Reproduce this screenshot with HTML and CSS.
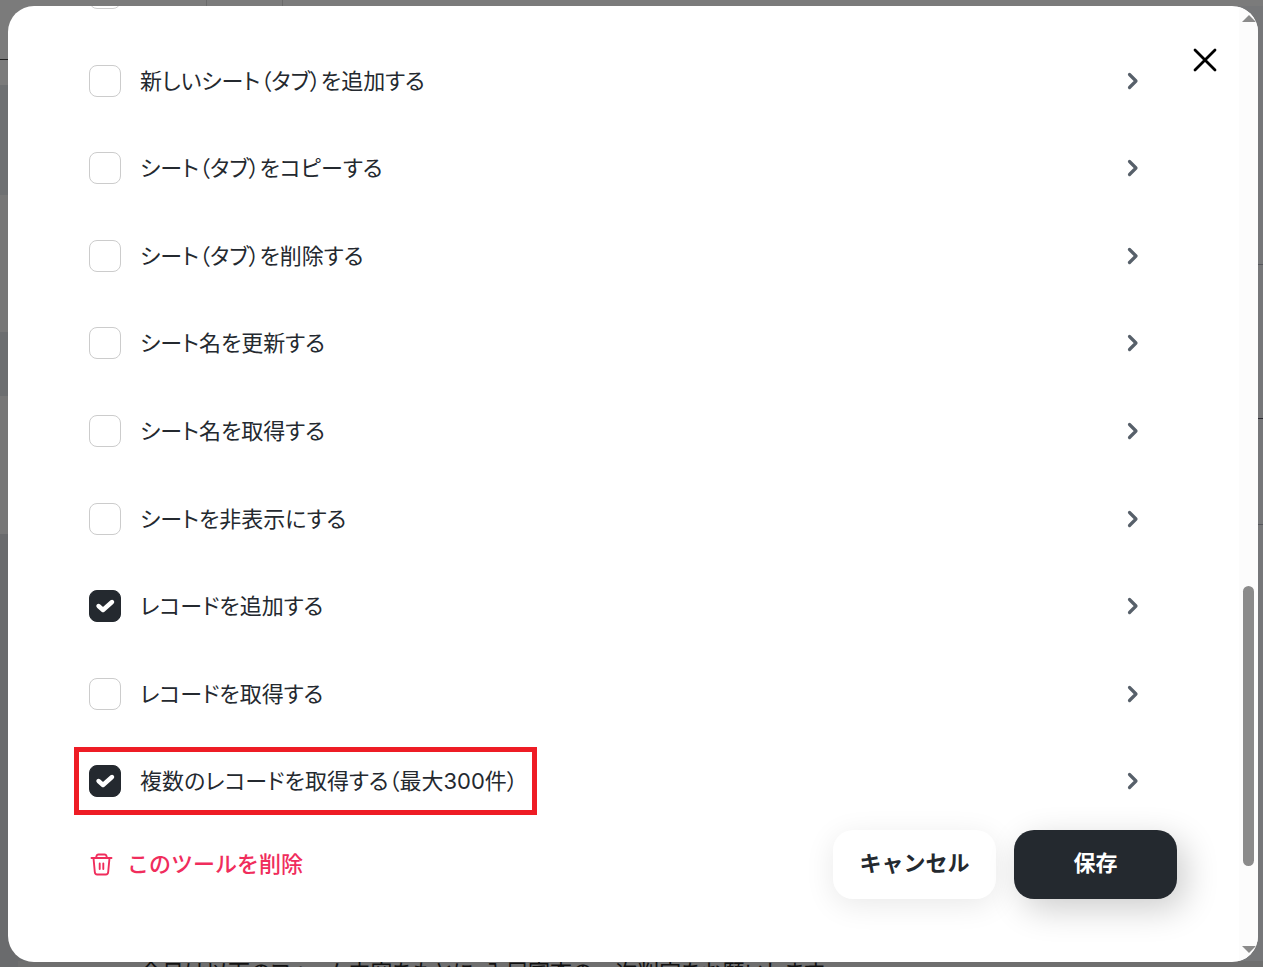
FILE: index.html
```
<!DOCTYPE html>
<html lang="ja">
<head>
  <meta charset="UTF-8">
  <meta name="viewport" content="width=device-width, initial-scale=1.0">
  <title>ツール設定</title>
  <link rel="stylesheet" href="styles.css">
</head>
<body>

  <svg class="symbols" aria-hidden="true">
    <symbol id="chevron" viewBox="0 0 16 20">
      <path d="M4.500 3.500L11 10L4.500 16.500" fill="none" stroke="currentColor" stroke-width="3.200" stroke-linecap="round" stroke-linejoin="round"/>
    </symbol>
  </svg>

  <div class="page-line">今日は以下のフォーム内容をもとに、入居審査の一次判定をお願いします</div>

  <div class="modal" role="dialog" aria-label="ツール設定">
    <div class="content">
      <div class="actions">
        <div class="row row-cut">
          <label class="option"><input type="checkbox" aria-label="シート"></label>
        </div>
        <div class="row">
          <label class="option"><input type="checkbox"> 新しいシート（タブ）を追加する</label>
          <button class="open" aria-label="詳細"><svg><use href="#chevron"/></svg></button>
        </div>
        <div class="row">
          <label class="option"><input type="checkbox"> シート（タブ）をコピーする</label>
          <button class="open" aria-label="詳細"><svg><use href="#chevron"/></svg></button>
        </div>
        <div class="row">
          <label class="option"><input type="checkbox"> シート（タブ）を削除する</label>
          <button class="open" aria-label="詳細"><svg><use href="#chevron"/></svg></button>
        </div>
        <div class="row">
          <label class="option"><input type="checkbox"> シート名を更新する</label>
          <button class="open" aria-label="詳細"><svg><use href="#chevron"/></svg></button>
        </div>
        <div class="row">
          <label class="option"><input type="checkbox"> シート名を取得する</label>
          <button class="open" aria-label="詳細"><svg><use href="#chevron"/></svg></button>
        </div>
        <div class="row">
          <label class="option"><input type="checkbox"> シートを非表示にする</label>
          <button class="open" aria-label="詳細"><svg><use href="#chevron"/></svg></button>
        </div>
        <div class="row">
          <label class="option"><input type="checkbox" checked> レコードを追加する</label>
          <button class="open" aria-label="詳細"><svg><use href="#chevron"/></svg></button>
        </div>
        <div class="row">
          <label class="option"><input type="checkbox"> レコードを取得する</label>
          <button class="open" aria-label="詳細"><svg><use href="#chevron"/></svg></button>
        </div>
        <div class="row">
          <label class="option highlight"><input type="checkbox" checked> 複数のレコードを取得する（最大300件）</label>
          <button class="open" aria-label="詳細"><svg><use href="#chevron"/></svg></button>
        </div>
      </div>

      <div class="footer">
        <button class="delete">
          <svg viewBox="0 0 24 24" fill="none" stroke="currentColor" stroke-width="1.900" stroke-linecap="round" stroke-linejoin="round">
            <path d="M2.500 6H22.500M7 6L7.600 3.800Q8 2.500 9.300 2.500H15.700Q17 2.500 17.400 3.800L18 6M4.500 6L5.800 20Q6 22.500 8.200 22.500H16.800Q19 22.500 19.200 20L20.500 6M10.700 11.500V17M14.300 11.500V17"/>
          </svg>
          このツールを削除
        </button>
        <div class="buttons">
          <button class="btn cancel">キャンセル</button>
          <button class="btn save">保存</button>
        </div>
      </div>
    </div>

    <div class="scrollbar" aria-hidden="true">
      <div class="arrow up"></div>
      <div class="track-before"></div>
      <div class="thumb"></div>
      <div class="track-after"></div>
      <div class="arrow down"></div>
    </div>

    <button class="close" aria-label="閉じる">
      <svg viewBox="0 0 24 24"><path d="M2 2L22 22M22 2L2 22" fill="none" stroke="#000" stroke-width="2.800" stroke-linecap="round"/></svg>
    </button>
  </div>

</body>
</html>
```
FILE: styles.css
```
* {
  box-sizing: border-box;
}

body {
  margin: 0;
  height: 100vh;
  padding: 6px 5px 5px 8px;
  display: flex;
  overflow: hidden;
  position: relative;
  font-family: Inter, "Noto Sans CJK JP", sans-serif;
  font-size: 22px;
  line-height: 32px;
  font-feature-settings: "palt";
  color: #24292f;
  /* dimmed page behind the dialog */
  background:
    linear-gradient(#6a6a6a, #6a6a6a) 206px 0 / 1px 6px no-repeat,
    linear-gradient(#6a6a6a, #6a6a6a) 282px 0 / 1px 6px no-repeat,
    linear-gradient(#7b7b7b, #7b7b7b) 18px 0 / 100% 6px no-repeat,
    linear-gradient(#6f6f6f, #6f6f6f) 18px 100% / 100% 6px no-repeat,
    linear-gradient(transparent 264px, #55565c 264px 265px, transparent 265px 418px, #2b2b33 418px 419px, transparent 419px 524px, #55565c 524px 525px, transparent 525px) 100% 0 / 5px 100% no-repeat,
    linear-gradient(#767779, #767779) 100% 0 / 30px 100% no-repeat,
    linear-gradient(#7b7b7b 59px, #222 59px 60px, #7b7b7b 60px 85px, #6e7072 85px 195px, #777 195px 332px, #6c6e70 332px 396px, #777 396px 534px, #6a6b6d 534px);
}

button {
  font: inherit;
  color: inherit;
  background: none;
  border: none;
  padding: 0;
  cursor: pointer;
}

.symbols {
  display: none;
}

.page-line {
  position: absolute;
  left: 140px;
  bottom: -21px;
  white-space: nowrap;
  color: #111;
}

.modal {
  flex: 1;
  display: flex;
  position: relative;
  background: #fff;
  border-radius: 26px;
  overflow: hidden;
}

.content {
  flex: 1;
  display: flex;
  flex-direction: column;
}

.actions {
  flex: 1;
  display: flex;
  flex-direction: column;
  padding: 0 98px 0 81px;
}

.row {
  flex: 1;
  display: flex;
  align-items: center;
  justify-content: space-between;
}

.row-cut {
  flex: none;
  height: 31px;
  align-items: flex-start;
}

.row-cut .option {
  margin-top: -29px;
}

.option {
  display: flex;
  align-items: center;
  gap: 19px;
  cursor: pointer;
}

.option input {
  appearance: none;
  width: 32px;
  height: 32px;
  margin: 0;
  border: 1px solid #ccc;
  border-radius: 8px;
  background: #fff;
}

.option input:checked {
  border-color: #24292f;
  background: #24292f url("data:image/svg+xml,%3Csvg xmlns='http://www.w3.org/2000/svg' viewBox='0 0 32 32'%3E%3Cpath d='M9.500 16L14 20L23 12' fill='none' stroke='white' stroke-width='4.400' stroke-linecap='round' stroke-linejoin='round'/%3E%3C/svg%3E") center / 32px 32px no-repeat;
}

.highlight {
  margin-left: -15px;
  padding: 13px 14px 13px 10px;
  border: 5px solid #ee1c25;
}

.open svg {
  display: block;
  width: 16px;
  height: 20px;
  color: #57606a;
}

.footer {
  display: flex;
  align-items: center;
  justify-content: space-between;
  padding: 5px 62px 63px 81px;
  font-feature-settings: normal;
}

.delete {
  display: flex;
  align-items: center;
  gap: 14px;
  padding-bottom: 2px;
  color: #f02d5c;
  font-weight: 500;
}

.delete svg {
  width: 24px;
  height: 24px;
}

.buttons {
  display: flex;
  gap: 18px;
}

.btn {
  width: 163px;
  height: 69px;
  padding-bottom: 4px;
  border-radius: 20px;
  font-weight: 700;
}

.cancel {
  background: #fff;
  box-shadow: 0 6px 30px rgba(0, 0, 0, 0.09);
}

.save {
  background: #24292f;
  color: #fff;
  box-shadow: 8px 10px 34px rgba(0, 0, 0, 0.2);
}

.scrollbar {
  width: 19px;
  padding: 9px 4px;
  display: flex;
  flex-direction: column;
  align-items: center;
  background: #fcfcfc;
}

.arrow {
  border: 7px solid transparent;
}

.up {
  border-top-width: 0;
  border-bottom-color: #8b8b8b;
}

.down {
  border-bottom-width: 0;
  border-top-color: #8b8b8b;
}

.track-before {
  flex: 564;
}

.thumb {
  flex: 280;
  width: 11px;
  border-radius: 6px;
  background: #8b8b8b;
}

.track-after {
  flex: 80;
}

.close {
  position: absolute;
  top: 42px;
  right: 41px;
}

.close svg {
  display: block;
  width: 24px;
  height: 24px;
}
```
